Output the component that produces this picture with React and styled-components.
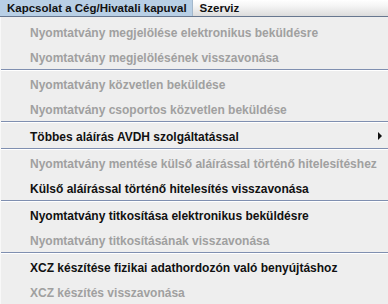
import styled, { createGlobalStyle } from "styled-components";

const GlobalStyle = createGlobalStyle`
  html, body {
    margin: 0;
    padding: 0;
    background: #eeeeee;
  }
  body {
    font-family: "Liberation Sans", Arial, sans-serif;
  }
`;

const Page = styled.div`
  width: 388px;
  height: 304px;
  overflow: hidden;
  display: flex;
  flex-direction: column;
  background: #eeeeee;
`;

const MenuBar = styled.div`
  display: flex;
  align-items: stretch;
  height: 20px;
  background: linear-gradient(#ffffff, #f4f4f4 40%, #dcdcdc);
  border-bottom: 1px solid #67778f;
`;

const MenuTitle = styled.div`
  display: flex;
  align-items: center;
  padding: 0 5px 0 7px;
  font-size: 11.5px;
  font-weight: bold;
  color: #111;
  background: ${(p) => (p.$active ? "#b8cfe5" : "transparent")};
  border-right: 1px solid ${(p) => (p.$active ? "#a3b8cc" : "transparent")};
`;

const Popup = styled.div`
  display: flex;
  flex-direction: column;
  padding-top: 2px;
  border-left: 1px solid #f8f8f8;
`;

const Item = styled.div`
  position: relative;
  display: flex;
  align-items: center;
  height: 25px;
  box-sizing: border-box;
  padding: 3px 0 0 29px;
  font-size: 12px;
  font-weight: bold;
  white-space: nowrap;
  color: ${(p) => (p.$disabled ? "#a0a0a0" : "#111111")};
`;

const Arrow = styled.span`
  position: absolute;
  right: 6px;
  top: 50%;
  transform: translateY(-50%);
  width: 0;
  height: 0;
  border-top: 4px solid transparent;
  border-bottom: 4px solid transparent;
  border-left: 4px solid #111;
`;

const Separator = styled.div`
  height: 2px;
  border-top: 1px solid #7f8fb0;
  background: #ffffff;
  box-sizing: border-box;
`;

const groups = [
  [
    { text: "Nyomtatvány megjelölése elektronikus beküldésre", disabled: true },
    { text: "Nyomtatvány megjelölésének visszavonása", disabled: true },
  ],
  [
    { text: "Nyomtatvány közvetlen beküldése", disabled: true },
    { text: "Nyomtatvány csoportos közvetlen beküldése", disabled: true },
  ],
  [{ text: "Többes aláírás AVDH szolgáltatással", submenu: true }],
  [
    {
      text: "Nyomtatvány mentése külső aláírással történő hitelesítéshez",
      disabled: true,
    },
    { text: "Külső aláírással történő hitelesítés visszavonása" },
  ],
  [
    { text: "Nyomtatvány titkosítása elektronikus beküldésre" },
    { text: "Nyomtatvány titkosításának visszavonása", disabled: true },
  ],
  [
    { text: "XCZ készítése fizikai adathordozón való benyújtáshoz" },
    { text: "XCZ készítés visszavonása", disabled: true },
  ],
];

export default function App() {
  return (
    <Page>
      <GlobalStyle />
      <MenuBar>
        <MenuTitle $active>Kapcsolat a Cég/Hivatali kapuval</MenuTitle>
        <MenuTitle>Szerviz</MenuTitle>
      </MenuBar>
      <Popup>
        {groups.map((group, gi) => (
          <div key={gi}>
            {gi > 0 && <Separator />}
            {group.map((item) => (
              <Item key={item.text} $disabled={item.disabled}>
                {item.text}
                {item.submenu && <Arrow />}
              </Item>
            ))}
          </div>
        ))}
      </Popup>
    </Page>
  );
}
